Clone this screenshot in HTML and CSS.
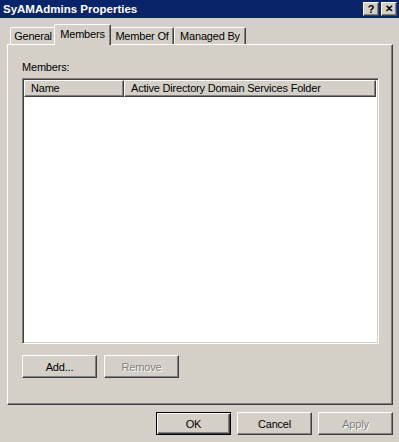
FILE: index.html
```html
<!DOCTYPE html>
<html>
<head>
<meta charset="utf-8">
<link rel="stylesheet" href="styles.css">
</head>
<body>
<div class="window">
  <div class="titlebar">
    <span class="title">SyAMAdmins Properties</span>
    <div class="caption-buttons">
      <span class="cap-btn">?</span>
      <span class="cap-btn close">✕</span>
    </div>
  </div>
  <div class="tabs">
    <div class="tab t-general">General</div>
    <div class="tab active t-members">Members</div>
    <div class="tab t-memberof">Member Of</div>
    <div class="tab t-managed">Managed By</div>
  </div>
  <div class="panel">
    <div class="label">Members:</div>
    <div class="listview">
      <div class="lv-header">
        <div class="lv-col col-name">Name</div>
        <div class="lv-col col-folder">Active Directory Domain Services Folder</div>
      </div>
      <div class="lv-body"></div>
    </div>
    <div class="panel-buttons">
      <button class="btn">Add...</button>
      <button class="btn disabled">Remove</button>
    </div>
  </div>
  <div class="dialog-buttons">
    <button class="btn default">OK</button>
    <button class="btn">Cancel</button>
    <button class="btn disabled">Apply</button>
  </div>
</div>
</body>
</html>
```

FILE: styles.css
```css
* { box-sizing: border-box; }
html, body { margin: 0; padding: 0; }
body { background: #d4d0c8; }
.window {
  width: 399px;
  height: 442px;
  background: #d4d0c8;
  font-family: "Liberation Sans", Arial, sans-serif;
  font-size: 11px;
  letter-spacing: -0.2px;
  color: #000;
  display: flex;
  flex-direction: column;
  overflow: hidden;
}
.titlebar {
  height: 18px;
  background: #0a246a;
  display: flex;
  align-items: center;
  justify-content: space-between;
  padding: 0 2px 0 3px;
}
.title {
  color: #fff;
  font-weight: bold;
  font-size: 11.5px;
  letter-spacing: 0;
}
.caption-buttons { display: flex; gap: 2px; }
.cap-btn {
  width: 16px;
  height: 14px;
  background: #d4d0c8;
  border: 1px solid;
  border-color: #fff #404040 #404040 #fff;
  box-shadow: inset -1px -1px #808080;
  display: flex;
  align-items: center;
  justify-content: center;
  font-weight: bold;
  font-size: 11px;
  line-height: 1;
  color: #000;
  letter-spacing: 0;
}
.cap-btn.close { font-size: 10px; }
.tabs {
  display: flex;
  align-items: flex-end;
  height: 21px;
  margin-top: 6px;
  padding-left: 10px;
  position: relative;
  z-index: 1;
  margin-bottom: -1px;
}
.tab {
  height: 17px;
  border: 1px solid;
  border-bottom: none;
  border-color: #fff #404040 transparent #fff;
  box-shadow: inset -1px 0 #808080;
  border-radius: 2px 2px 0 0;
  padding: 2px 0 0;
  text-align: center;
  background: #d4d0c8;
  margin-bottom: 1px;
}
.t-general { width: 46px; }
.t-members { width: 57px; }
.t-memberof { width: 64px; }
.t-managed { width: 72px; }
.tab.active {
  height: 21px;
  margin: 0 -1px 0 -2px;
  padding-top: 3px;
  margin-bottom: 0;
  position: relative;
  z-index: 2;
}
.panel {
  margin: 0 6px 0 7px;
  height: 361px;
  border: 1px solid;
  border-color: #fff #404040 #404040 #fff;
  box-shadow: inset -1px -1px #808080;
  padding: 14px 14px 0 14px;
  display: flex;
  flex-direction: column;
}
.label { height: 19px; line-height: 13px; padding-top: 2px; }
.listview {
  width: 357px;
  height: 266px;
  border: 1px solid;
  border-color: #808080 #fff #fff #808080;
  box-shadow: inset 1px 1px #404040, inset -1px -1px #d4d0c8;
  background: #fff;
  padding: 1px 2px 2px 1px;
  display: flex;
  flex-direction: column;
}
.lv-header { display: flex; height: 17px; }
.lv-col {
  background: #d4d0c8;
  border: 1px solid;
  border-color: #fff #404040 #404040 #fff;
  box-shadow: inset -1px -1px #808080;
  padding: 1px 0 0 6px;
  line-height: 13px;
  white-space: nowrap;
  overflow: hidden;
}
.col-name { width: 100px; }
.col-folder { width: 252px; }
.lv-body { flex: 1; }
.panel-buttons {
  display: flex;
  gap: 7px;
  margin-top: 11px;
}
.btn {
  width: 75px;
  height: 23px;
  padding: 0;
  font-family: "Liberation Sans", Arial, sans-serif;
  font-size: 11px;
  letter-spacing: -0.2px;
  color: #000;
  background: #d4d0c8;
  border: 1px solid;
  border-color: #fff #404040 #404040 #fff;
  box-shadow: inset -1px -1px #808080;
  border-radius: 0;
}
.btn.disabled { color: #808080; text-shadow: 1px 1px #fff; }
.btn.default {
  border: 1px solid #000;
  box-shadow: inset 1px 1px #fff, inset -1px -1px #404040, inset -2px -2px #808080;
}
.dialog-buttons {
  display: flex;
  justify-content: flex-end;
  gap: 6px;
  padding: 0 6px 0 0;
  margin-top: 7px;
}
```
